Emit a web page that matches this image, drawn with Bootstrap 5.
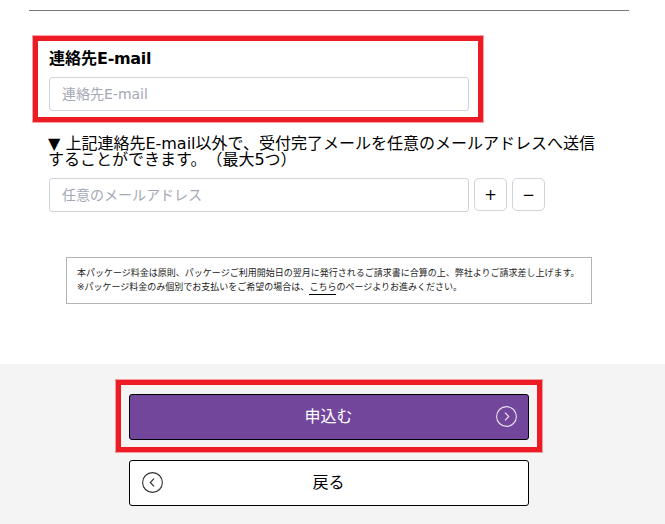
<!DOCTYPE html>
<html lang="ja">
<head>
<meta charset="utf-8">
<title>申込</title>
<link href="https://cdn.jsdelivr.net/npm/bootstrap@5.3.0/dist/css/bootstrap.min.css" rel="stylesheet">
<style>
html,body{height:524px;overflow:hidden;background:#fff}
body{font-family:"DejaVu Sans","Noto Sans CJK JP",sans-serif;color:#000;font-feature-settings:"chws" 0;text-spacing-trim:space-all}
.top-rule{height:1px;background:#777;margin:10px 36px 0 29px}
.form-area{height:353px;padding:25px 0 0 33px}
.red-frame{border:5px solid #ed1c24;box-shadow:0 0 0 1px rgba(237,28,36,.4)}
.contact-frame{width:450px;height:86px;padding:6px 11px 0}
.contact-label{font-size:16px;font-weight:700;line-height:24px;margin-bottom:6px}
.latin-tight{letter-spacing:-.3px}
.field{width:420px;height:34px;border:1px solid #ced4da;border-radius:3px;padding:0 12px 1px;font-family:inherit;font-size:14px;box-shadow:none}
.field::placeholder{color:#a3a8b4}
.note-text{width:560px;margin:14px 0 10px 15px;font-size:16px;line-height:16px}
.add-row{margin-left:16px;gap:5px}
.square-btn{width:33px;height:33px;padding:0;border:1px solid #ced4da;border-radius:5px;background:#fff;color:#000;font-size:15px;line-height:28px}
.notice-box{width:526px;height:47px;margin:45px 0 0 33px;border:1px solid #b3b3b3;padding:8px 10px 0;font-size:9px;line-height:14px;white-space:nowrap;color:#222}
.notice-box a{color:#222;text-decoration:none;border-bottom:1px solid #000;padding-bottom:2px}
.foot-area{height:160px;background:#f4f4f4;padding:16px 8px 0 0}
.submit-frame{width:426px;height:72px;padding:9px 8px}
.wide-btn{width:400px;height:46px;border:1px solid #000;border-radius:3px;font-size:16px;position:relative;padding:0}
.go-btn,.go-btn:hover{background:#72479b;color:#fff;border-color:#000}
.back-btn,.back-btn:hover{background:#fff;color:#000;border-color:#000;margin-top:8px}
.circle-icon{position:absolute;top:11px;width:21px;height:21px}
.circle-right{right:11px}
.circle-left{left:12px}
</style>
</head>
<body>
<div class="top-rule"></div>
<main class="form-area">
  <div class="red-frame contact-frame">
    <div class="contact-label">連絡先<span class="latin-tight">E-mail</span></div>
    <input class="form-control field" type="text" placeholder="連絡先E-mail">
  </div>
  <p class="note-text">▼ 上記連絡先E-mail以外で、受付完了メールを任意のメールアドレスへ送信することができます。（最大5つ）</p>
  <div class="add-row d-flex">
    <input class="form-control field" type="text" placeholder="任意のメールアドレス">
    <button class="btn square-btn" type="button">+</button>
    <button class="btn square-btn" type="button">−</button>
  </div>
  <div class="notice-box">本パッケージ料金は原則、パッケージご利用開始日の翌月に発行されるご請求書に合算の上、弊社よりご請求差し上げます。<br>※パッケージ料金のみ個別でお支払いをご希望の場合は、<a href="#">こちら</a>のページよりお進みください。</div>
</main>
<footer class="foot-area d-flex flex-column align-items-center">
  <div class="red-frame submit-frame">
    <button class="btn wide-btn go-btn d-block" type="button">申込む
      <svg class="circle-icon circle-right" viewBox="0 0 21 21" fill="none" stroke="#e8e2ee"><circle cx="10.5" cy="10.5" r="9.9" stroke-width="1.1"/><path d="M9 6.7 12.7 10.5 9 14.3" stroke-width="1.2"/></svg>
    </button>
  </div>
  <button class="btn wide-btn back-btn d-block" type="button">
    <svg class="circle-icon circle-left" viewBox="0 0 21 21" fill="none" stroke="#333"><circle cx="10.5" cy="10.5" r="9.9" stroke-width="1.1"/><path d="M12 6.7 8.3 10.5 12 14.3" stroke-width="1.2"/></svg>
    戻る
  </button>
</footer>
<script src="https://cdn.jsdelivr.net/npm/bootstrap@5.3.0/dist/js/bootstrap.bundle.min.js"></script>
</body>
</html>
